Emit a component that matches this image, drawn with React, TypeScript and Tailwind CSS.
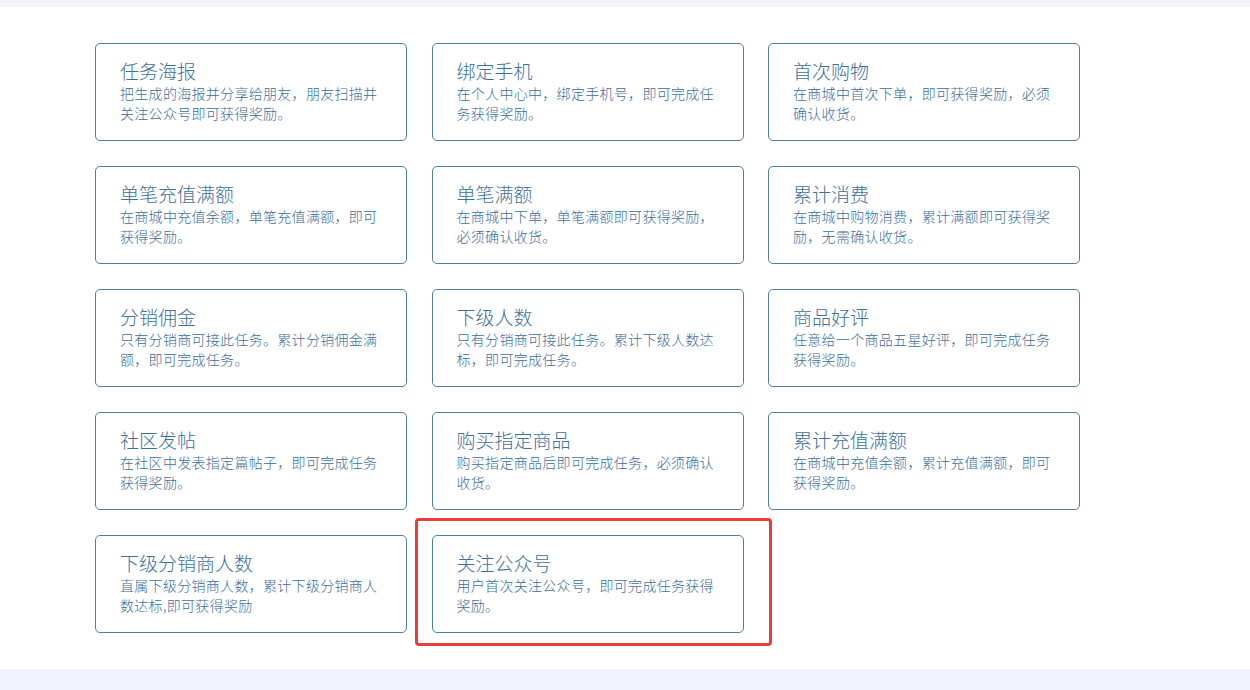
const tasks = [
  { title: '任务海报', desc: '把生成的海报并分享给朋友，朋友扫描并关注公众号即可获得奖励。' },
  { title: '绑定手机', desc: '在个人中心中，绑定手机号，即可完成任务获得奖励。' },
  { title: '首次购物', desc: '在商城中首次下单，即可获得奖励，必须确认收货。' },
  { title: '单笔充值满额', desc: '在商城中充值余额，单笔充值满额，即可获得奖励。' },
  { title: '单笔满额', desc: '在商城中下单，单笔满额即可获得奖励，必须确认收货。' },
  { title: '累计消费', desc: '在商城中购物消费，累计满额即可获得奖励，无需确认收货。' },
  { title: '分销佣金', desc: '只有分销商可接此任务。累计分销佣金满额，即可完成任务。' },
  { title: '下级人数', desc: '只有分销商可接此任务。累计下级人数达标，即可完成任务。' },
  { title: '商品好评', desc: '任意给一个商品五星好评，即可完成任务获得奖励。' },
  { title: '社区发帖', desc: '在社区中发表指定篇帖子，即可完成任务获得奖励。' },
  { title: '购买指定商品', desc: '购买指定商品后即可完成任务，必须确认收货。' },
  { title: '累计充值满额', desc: '在商城中充值余额，累计充值满额，即可获得奖励。' },
  { title: '下级分销商人数', desc: '直属下级分销商人数，累计下级分销商人数达标,即可获得奖励' },
  { title: '关注公众号', desc: '用户首次关注公众号，即可完成任务获得奖励。', active: true },
]

export default function App() {
  return (
    <div
      className="w-[1250px] h-[690px] flex flex-col bg-[#f0f3fd] overflow-hidden"
      style={{ fontFamily: '"Noto Sans CJK SC", "Noto Sans", sans-serif' }}
    >
      <div className="h-[7px] shrink-0" />
      <div className="h-[662px] shrink-0 bg-white pt-[36px] pl-[95px]">
        <div className="grid grid-cols-[312px_312px_312px] gap-x-[24.5px] gap-y-[25px] w-fit">
          {tasks.map((t) => (
            <TaskCard key={t.title} title={t.title} desc={t.desc} active={t.active} />
          ))}
        </div>
      </div>
    </div>
  )
}

function TaskCard({ title, desc, active }: { title: string; desc: string; active?: boolean }) {
  return (
    <div className="relative h-[98px] rounded-[5px] border border-[#4d7ea6] bg-white pl-[24px] pt-[15px] text-[#3e6f9d]">
      <p className="text-[19px] leading-[24px] font-light">{title}</p>
      <p className="w-[262px] text-[14px] leading-[20px] tracking-[0.3px] font-light text-[#3a6d9e]">{desc}</p>
      {active && (
        <div className="absolute left-[-18px] top-[-18px] w-[357px] h-[128px] rounded-[4px] border-[3px] border-[#ee3b3b] pointer-events-none" />
      )}
    </div>
  )
}
